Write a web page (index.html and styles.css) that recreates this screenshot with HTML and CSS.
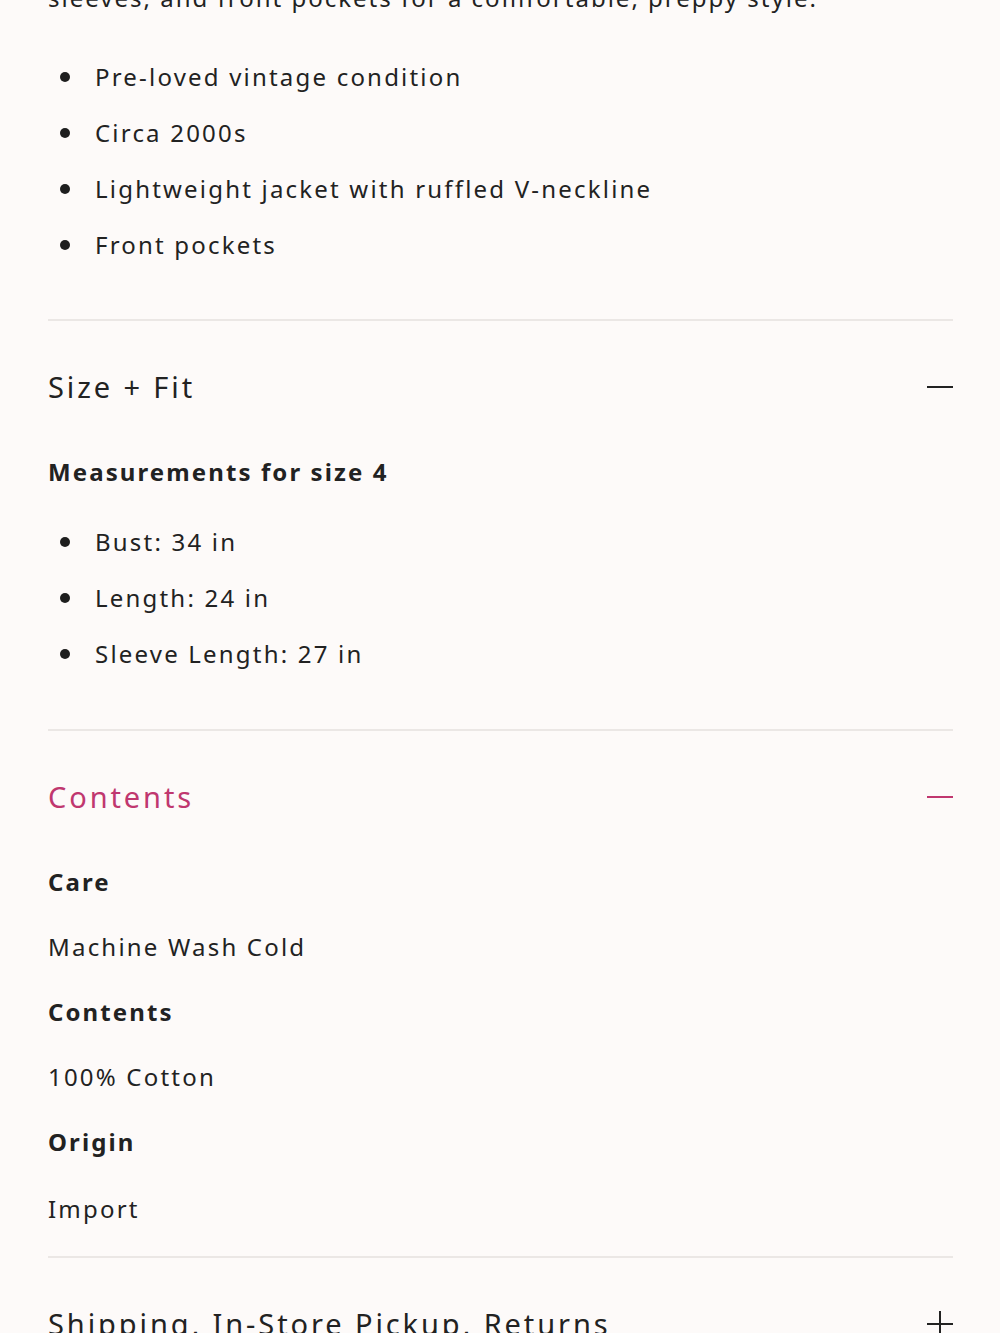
FILE: index.html
```html
<!DOCTYPE html>
<html>
<head>
<meta charset="utf-8">
<link rel="stylesheet" href="styles.css">
</head>
<body>
<div class="page">
  <p class="intro">sleeves, and front pockets for a comfortable, preppy style.</p>
  <ul class="bullets first">
    <li>Pre-loved vintage condition</li>
    <li>Circa 2000s</li>
    <li>Lightweight jacket with ruffled V-neckline</li>
    <li>Front pockets</li>
  </ul>

  <section class="acc">
    <div class="acc-head">
      <h2 class="acc-title">Size + Fit</h2>
      <span class="icon minus"></span>
    </div>
    <div class="acc-body">
      <h3 class="label">Measurements for size 4</h3>
      <ul class="bullets">
        <li>Bust: 34 in</li>
        <li>Length: 24 in</li>
        <li>Sleeve Length: 27 in</li>
      </ul>
    </div>
  </section>

  <section class="acc open">
    <div class="acc-head">
      <h2 class="acc-title pink">Contents</h2>
      <span class="icon minus pinkbg"></span>
    </div>
    <div class="acc-body defs">
      <h3 class="label">Care</h3>
      <p class="val">Machine Wash Cold</p>
      <h3 class="label">Contents</h3>
      <p class="val">100% Cotton</p>
      <h3 class="label">Origin</h3>
      <p class="val">Import</p>
    </div>
  </section>

  <section class="acc">
    <div class="acc-head">
      <h2 class="acc-title">Shipping, In-Store Pickup, Returns</h2>
      <span class="icon plus"></span>
    </div>
  </section>
</div>
</body>
</html>
```

FILE: styles.css
```css
* { box-sizing: border-box; }
html, body { margin: 0; padding: 0; }
body {
  background: #fdfaf9;
  color: #222;
  font-family: "Noto Sans", "DejaVu Sans", sans-serif;
  overflow: hidden;
  height: 1333px;
}
.page {
  padding: 0 47px 0 48px;
  margin-top: -22px;
}
.intro {
  margin: 0;
  font-size: 24px;
  line-height: 40px;
  letter-spacing: 2px;
  white-space: nowrap;
}
.bullets {
  margin: 0;
  padding: 0;
  list-style: none;
}
.bullets li {
  position: relative;
  padding-left: 47px;
  font-size: 24px;
  line-height: 56px;
  letter-spacing: 2.2px;
}
.bullets li::before {
  content: "";
  position: absolute;
  left: 12px;
  top: 23px;
  width: 10px;
  height: 10px;
  border-radius: 50%;
  background: #1e1e1e;
}
.bullets.first { margin-top: 31px; padding-bottom: 46px; }
.acc { border-top: 2px solid #ebe7e5; }
.acc-head {
  display: flex;
  align-items: center;
  justify-content: space-between;
  height: 134px;
  padding-bottom: 4px;
}
.acc-title {
  margin: 0;
  font-weight: 400;
  font-size: 29px;
  letter-spacing: 2.9px;
  color: #222;
  white-space: nowrap;
}
.acc-title.pink { color: #c0376f; }
.icon { position: relative; width: 26px; height: 26px; flex: none; }
.icon.minus::before, .icon.plus::before, .icon.plus::after {
  content: "";
  position: absolute;
  background: #222;
}
.icon.minus::before, .icon.plus::before {
  left: 0; right: 0; top: 13px; height: 2px;
}
.icon.plus::after { top: 1px; bottom: -1px; left: 12px; width: 2px; }
.icon.pinkbg::before { background: #c0376f; }
.acc-body { padding-bottom: 47px; }
.label {
  margin: 0;
  font-size: 24px;
  font-weight: 700;
  letter-spacing: 2.1px;
  line-height: 34px;
}
.acc-body .label + .bullets { margin-top: 25px; }
.val {
  margin: 31px 0 31px;
  font-size: 24px;
  letter-spacing: 2.2px;
  line-height: 34px;
}
.defs { padding-bottom: 17px; }
.defs .val:last-child { margin-bottom: 13px; margin-top: 33px; }
```
